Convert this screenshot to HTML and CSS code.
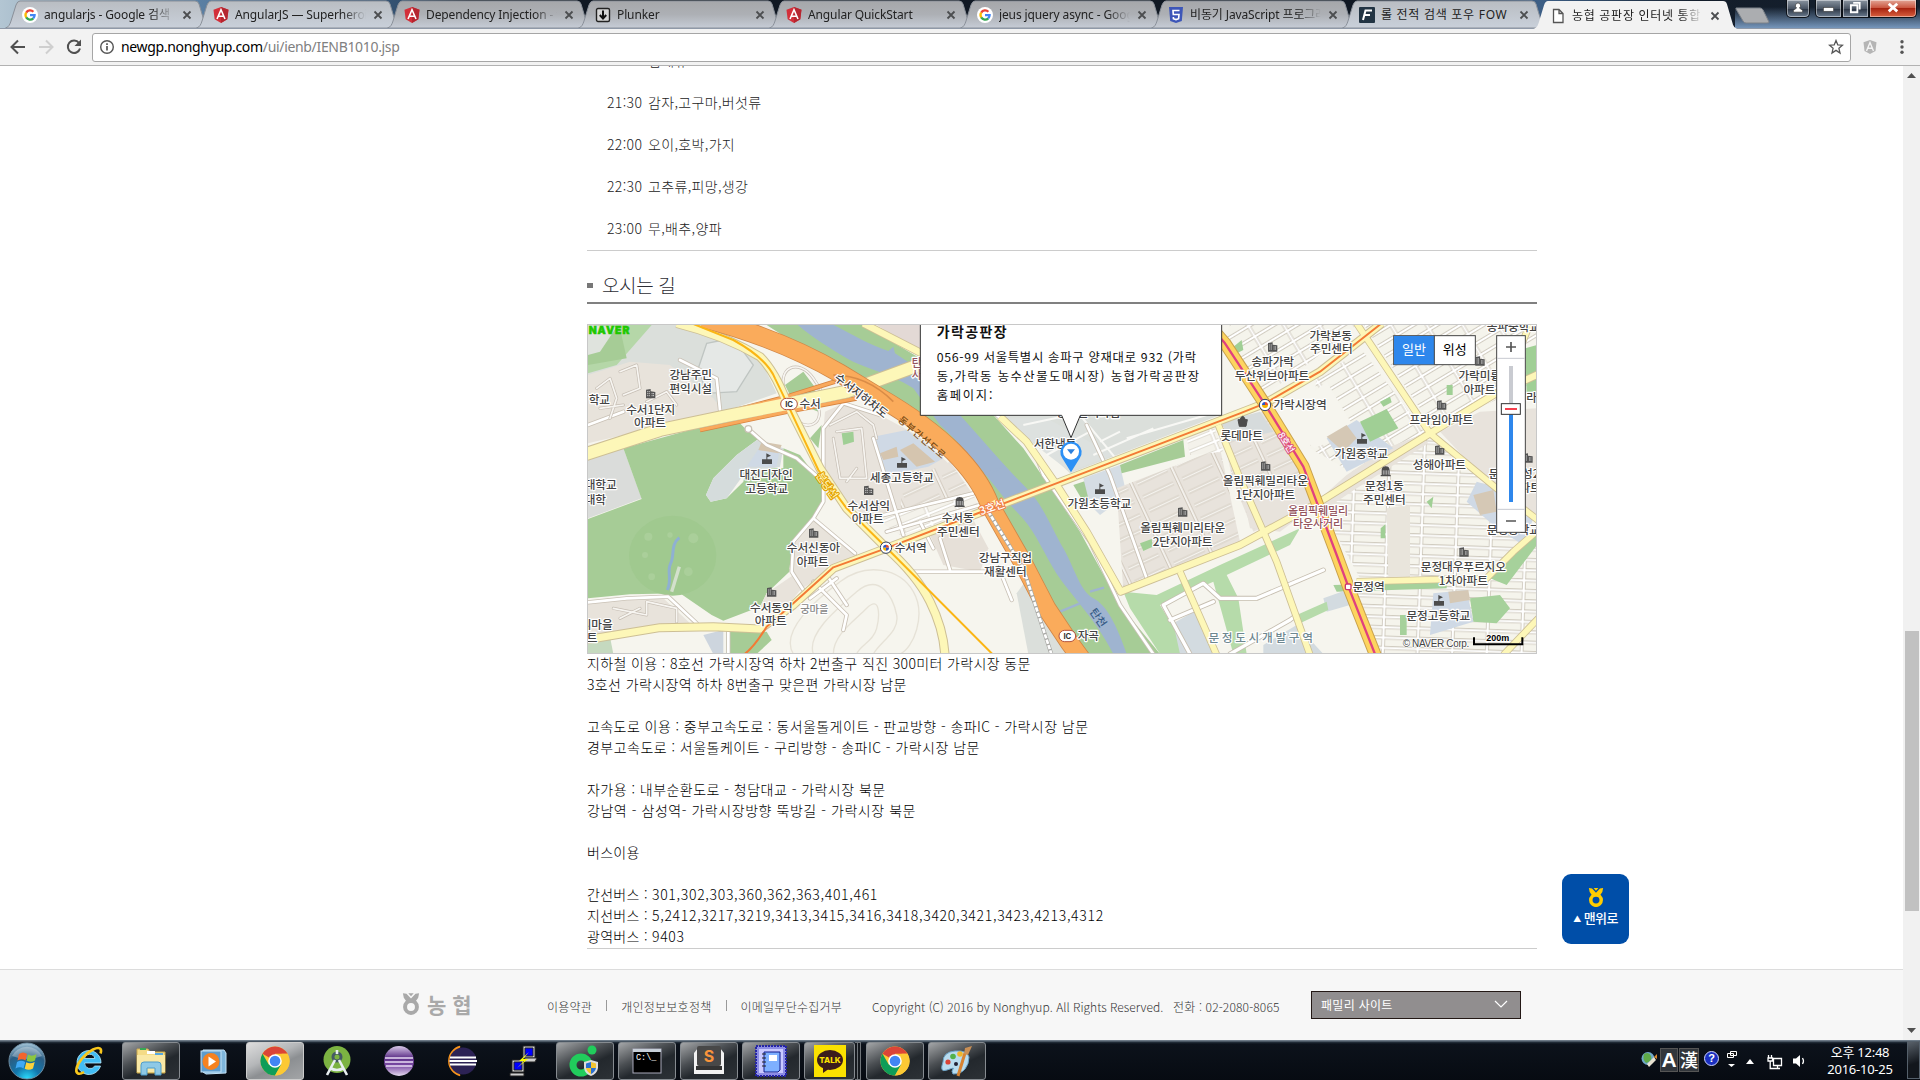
FILE: index.html
```html
<!DOCTYPE html>
<html lang="ko">
<head>
<meta charset="utf-8">
<title>농협 공판장 인터넷 통합</title>
<link rel="stylesheet" href="styles.css">
</head>
<body>
<svg class="defs" width="0" height="0">
  <defs>
    <linearGradient id="tabfill" x1="0" y1="0" x2="0" y2="1"><stop offset="0" stop-color="#a6a7aa"/><stop offset=".5" stop-color="#adb0b5"/><stop offset="1" stop-color="#c6ccd6"/></linearGradient>
    <linearGradient id="tabfill2" x1="0" y1="0" x2="0" y2="1"><stop offset="0" stop-color="#b9bdc2"/><stop offset="1" stop-color="#c9d0da"/></linearGradient>
    <radialGradient id="orb" cx=".5" cy="1" r="1"><stop offset="0" stop-color="#2ce0ff"/><stop offset=".35" stop-color="#1277ad"/><stop offset=".7" stop-color="#2b5d83"/><stop offset="1" stop-color="#a9c9dc"/></radialGradient>
    <linearGradient id="purple" x1="0" y1="0" x2="0" y2="1"><stop offset="0" stop-color="#d8c8e8"/><stop offset=".4" stop-color="#5b2e86"/><stop offset=".65" stop-color="#7b4ba5"/><stop offset="1" stop-color="#e6dcf0"/></linearGradient>
    <symbol id="tabshape" viewBox="0 0 204 28" preserveAspectRatio="none"><path d="M.5 28C4 27 5 24 6 21L11 5Q12.500 1 15 1H190Q193 1 194 4L200 24Q201 27 204 28Z"/></symbol>
    <symbol id="g" viewBox="0 0 16 16"><circle cx="8" cy="8" r="8" fill="#fff"/><g fill="none" stroke-width="2.300"><path d="M4.200 5.600A4.600 4.600 0 0 1 11.400 4.700" stroke="#ea4335"/><path d="M4.300 10.500A4.600 4.600 0 0 1 4.200 5.600" stroke="#fbbc05"/><path d="M11.300 11.400A4.600 4.600 0 0 1 4.200 10.400" stroke="#34a853"/><path d="M8 8.200H12.600A4.600 4.600 0 0 1 11.200 11.400" stroke="#4285f4"/></g></symbol>
    <symbol id="ng" viewBox="0 0 16 16"><path d="M8 0L15.500 2.700L14.300 12.300L8 16L1.700 12.300L.5 2.700Z" fill="#d32f3a"/><path d="M8 0L15.500 2.700L14.300 12.300L8 16Z" fill="#b52630"/><path d="M4 12L8 2.800L12 12M5.600 9.200H10.400" fill="none" stroke="#fff" stroke-width="1.600"/></symbol>
    <symbol id="x" viewBox="0 0 10 10"><path d="M1.500 1.500L8.500 8.500M8.500 1.500L1.500 8.500" stroke="#4c4e50" stroke-width="1.800"/></symbol>
    <symbol id="chrome" viewBox="0 0 32 32"><circle cx="16" cy="16" r="14.500" fill="#fcc934"/><path d="M16 16L3.500 8.700A14.500 14.500 0 0 1 28.600 8.700H16Z" fill="#db4437"/><path d="M16 16L16 30.500A14.500 14.500 0 0 1 3.500 8.700L9.700 19.600Z" fill="#0f9d58"/><path d="M16 30.500L22.300 19.600L16 16Z" fill="#0f9d58"/><path d="M16 30.500L22.700 18.500V8.700H28.600A14.500 14.500 0 0 1 16 30.500Z" fill="#fcc934"/><circle cx="16" cy="16" r="6.800" fill="#fff"/><circle cx="16" cy="16" r="5.300" fill="#4285f4"/></symbol>
    <symbol id="nh" viewBox="0 0 20 24"><ellipse cx="10" cy="15.300" rx="6.600" ry="6.600" fill="none" stroke="currentColor" stroke-width="4.400"/><path d="M1 0L5 .5L10 6L15 .5L19 0L18 5L14.500 10L10 9.500L5.500 10L2 5ZM7 0L10 3.500L13 0Z" fill="currentColor"/></symbol>
  </defs>
</svg>

<header class="browser">
  <div class="tabstrip">
    <div class="tabs">
      <div class="tab lite"><svg class="shape"><use href="#tabshape"/></svg><div class="in"><svg class="fav"><use href="#g"/></svg><span class="t">angularjs - Google 검색</span><svg class="x"><use href="#x"/></svg></div></div>
      <div class="tab lite"><svg class="shape"><use href="#tabshape"/></svg><div class="in"><svg class="fav"><use href="#ng"/></svg><span class="t">AngularJS — Superheroic</span><svg class="x"><use href="#x"/></svg></div></div>
      <div class="tab"><svg class="shape"><use href="#tabshape"/></svg><div class="in"><svg class="fav"><use href="#ng"/></svg><span class="t">Dependency Injection - ts</span><svg class="x"><use href="#x"/></svg></div></div>
      <div class="tab"><svg class="shape"><use href="#tabshape"/></svg><div class="in"><svg class="fav" viewBox="0 0 16 16"><rect x="1.500" y="1.500" width="13" height="13" rx="1.500" fill="#d6d6d6" stroke="#222" stroke-width="1.400"/><path d="M8 3.500V11M4.800 8L8 11.500L11.200 8" fill="none" stroke="#111" stroke-width="2"/></svg><span class="t">Plunker</span><svg class="x"><use href="#x"/></svg></div></div>
      <div class="tab"><svg class="shape"><use href="#tabshape"/></svg><div class="in"><svg class="fav"><use href="#ng"/></svg><span class="t">Angular QuickStart</span><svg class="x"><use href="#x"/></svg></div></div>
      <div class="tab"><svg class="shape"><use href="#tabshape"/></svg><div class="in"><svg class="fav"><use href="#g"/></svg><span class="t">jeus jquery async - Google</span><svg class="x"><use href="#x"/></svg></div></div>
      <div class="tab"><svg class="shape"><use href="#tabshape"/></svg><div class="in"><svg class="fav" viewBox="0 0 16 16"><path d="M1 0H15L13.800 14L8 16L2.200 14Z" fill="#3d56b8"/><path d="M11.500 3.500H5L5.300 7.500H11L10.600 11.700L8 12.600L5.400 11.700V10" fill="none" stroke="#fff" stroke-width="1.600"/></svg><span class="t">비동기 JavaScript 프로그래밍</span><svg class="x"><use href="#x"/></svg></div></div>
      <div class="tab lite"><svg class="shape"><use href="#tabshape"/></svg><div class="in"><svg class="fav" viewBox="0 0 16 16"><rect width="16" height="16" rx="1" fill="#223443"/><path d="M4 13L6.500 3.500H13M5.500 8H11" fill="none" stroke="#fff" stroke-width="2"/></svg><span class="t ko full">롤 전적 검색 포우 FOW</span><svg class="x"><use href="#x"/></svg></div></div>
      <div class="tab active"><svg class="shape"><use href="#tabshape"/></svg><div class="in"><svg class="fav" viewBox="0 0 16 16"><path d="M3.500 1.500H9L13 5.500V14.500H3.500ZM9 1.500V5.500H13" fill="#fff" stroke="#555" stroke-width="1.300"/></svg><span class="t ko">농협 공판장 인터넷 통합</span><svg class="x"><use href="#x"/></svg></div></div>
    </div>
    <svg class="newtab" viewBox="0 0 36 17"><path d="M1 1H25Q27 1 28 3L34 15Q34 16 32 16H11Q9 16 8 14L1 2Z" fill="#abadb0" stroke="#7d8289"/></svg>
    <div class="winbtns">
      <span class="wb user"><svg viewBox="0 0 24 18"><path d="M12 3a3 3 0 0 1 1.500 5.500L17 11V13H7V11L10.500 8.500A3 3 0 0 1 12 3Z" fill="#fff" stroke="#333" stroke-width=".7"/></svg></span>
      <span class="wb min"><svg viewBox="0 0 27 18"><rect x="8" y="8" width="11" height="4" fill="#fff" stroke="#444" stroke-width=".7"/></svg></span><span class="wb res"><svg viewBox="0 0 27 18"><path d="M11 3H18V10M8.500 5.500H15.500V13H8.500Z" fill="none" stroke="#fff" stroke-width="2"/></svg></span><span class="wb close"><svg viewBox="0 0 48 18"><path d="M19.500 4L28.500 12M28.500 4L19.500 12" stroke="#fff" stroke-width="3"/></svg></span>
    </div>
  </div>
  <div class="toolbar">
    <svg class="nav" viewBox="0 0 86 36" width="86" height="36"><g fill="none" stroke="#505050" stroke-width="2"><path d="M25 18H12M18 11.500L11.500 18L18 24.500"/><path d="M39 18H52M46 11.500L52.500 18L46 24.500" stroke="#cfcfcf"/><path d="M79 14A6.200 6.200 0 1 0 80 19.500"/></g><path d="M81 10.500V17H74.500Z" fill="#505050"/></svg>
    <div class="url">
      <svg width="16" height="16" viewBox="0 0 16 16"><circle cx="8" cy="8" r="6.300" fill="none" stroke="#555" stroke-width="1.400"/><path d="M8 7V11.500M8 4.300V5.900" stroke="#555" stroke-width="1.700"/></svg>
      <span class="addr">newgp.nonghyup.com<i>/ui/ienb/IENB1010.jsp</i></span>
      <svg width="16" height="16" viewBox="0 0 16 16"><path d="M8 1.500L9.800 5.900L14.500 6.200L10.900 9.300L12 14L8 11.400L4 14L5.100 9.300L1.500 6.200L6.200 5.900Z" fill="none" stroke="#555" stroke-width="1.300"/></svg>
    </div>
    <svg width="16" height="16" viewBox="0 0 16 16"><path d="M8 1L14.500 3.300L13.500 12L8 15L2.500 12L1.500 3.300Z" fill="#b5b5b5"/><path d="M4.500 12L8 3.500L11.500 12M6 9.300H10" fill="none" stroke="#f4f4f4" stroke-width="1.400"/></svg>
    <svg width="6" height="16" viewBox="0 0 6 16"><g fill="#555"><circle cx="3" cy="2.800" r="1.700"/><circle cx="3" cy="8" r="1.700"/><circle cx="3" cy="13.200" r="1.700"/></g></svg>
  </div>
</header>

<div class="viewport">
<main class="page">
  <div class="col">
    <ul class="sched">
      <li>21:00 엽채류</li><li>21:30 감자,고구마,버섯류</li><li>22:00 오이,호박,가지</li><li>22:30 고추류,피망,생강</li><li>23:00 무,배추,양파</li>
    </ul>
    <h2>오시는 길</h2>
    <svg class="map" viewBox="21 27 2850 990" width="950" height="330">
      <defs>
        <pattern id="blkA" width="88" height="30" patternUnits="userSpaceOnUse" patternTransform="rotate(-22)"><rect width="88" height="30" fill="#f4f2eb"/><path d="M0 15H88M40 0V30" stroke="#cfc9bd" stroke-width="11"/><path d="M0 15H88M40 0V30" stroke="#fff" stroke-width="7"/></pattern>
        <pattern id="blkB" width="92" height="36" patternUnits="userSpaceOnUse" patternTransform="rotate(-31)"><rect width="92" height="36" fill="#f5f4ec"/><path d="M0 18H92M46 0V36" stroke="#c6bfb2" stroke-width="11"/><path d="M0 18H92M46 0V36" stroke="#fff" stroke-width="6.500"/></pattern>
        <pattern id="blkC" width="104" height="31" patternUnits="userSpaceOnUse" patternTransform="rotate(2)"><rect width="104" height="31" fill="#f5f4ec"/><path d="M0 15H104M50 0V31" stroke="#c6bfb2" stroke-width="11"/><path d="M0 15H104M50 0V31" stroke="#fff" stroke-width="6.500"/></pattern>
        <pattern id="apt" width="130" height="44" patternUnits="userSpaceOnUse" patternTransform="rotate(-25)"><rect width="130" height="44" fill="#e8e3dc"/><path d="M0 22H100M115 0V44" stroke="#c9c0b3" stroke-width="10" fill="none"/><path d="M0 22H100M115 0V44" stroke="#f6f4f0" stroke-width="5.500" fill="none"/></pattern>
        <symbol id="bd" viewBox="0 0 30 30" overflow="visible"><path d="M0 2L14 0V7L28 9V28H0Z" fill="#555"/><path d="M4 8H11M4 14H11M4 20H11M17 14H25M17 20H25" stroke="#eee" stroke-width="3" stroke-dasharray="2.500 2"/></symbol>
        <symbol id="sc" viewBox="0 0 30 32" overflow="visible"><path d="M0 18H30V32H0ZM13 0V18H16V12L27 7L13 0Z" fill="#4c4c4c"/></symbol>
        <symbol id="ct" viewBox="0 0 30 30" overflow="visible"><path d="M3 12A12 12 0 0 1 27 12V26H30V30H0V26H3ZM13 0H17V4H13Z" fill="#4c4c4c"/><path d="M8 12V25M13 12V25M18 12V25M23 12V25" stroke="#ddd" stroke-width="2"/></symbol>
      </defs>
      <rect x="0" y="0" width="2900" height="1040" fill="#f6f5ee"/>
      <!-- neighbourhood fills -->
      <path d="M90 30H330L540 130L590 235L430 290L24 380V30Z" fill="#dbdfdb"/>
      <path d="M24 180L150 140L270 150L400 250L430 290L24 385Z" fill="#e8e3db"/>
      <path d="M24 30H215L110 150L24 175Z" fill="#b5d7a8"/><path d="M24 40H120L140 130L24 150Z" fill="#a6cc96"/>
      <path d="M24 30L110 35L60 110L24 120Z" fill="#dfe3dd"/>
      <path d="M380 85L430 75L490 110L520 150L470 230L380 235L355 160Z" fill="#e5e8e6" stroke="#bfc5c2" stroke-width="4"/>
      <path d="M24 415L130 400L185 550L24 610Z" fill="#dadcda"/>
      <path d="M130 400L330 345L470 315L500 345L535 372L470 420L400 490L378 540L392 560L440 550L490 500L500 455L610 460L610 400L660 420L705 480L735 500L730 560L700 612L665 650L640 690L628 770L560 835L540 875L430 917L395 900L300 835L150 838L24 850V612L185 552Z" fill="#a6cc96"/>
      <path d="M535 372L470 420L400 490L378 540L392 560L440 550L490 480L600 455L610 400Z" fill="#d5dcdc"/>
      <path d="M540 395L600 400L590 455L500 455Z" fill="#cfd9e5"/><path d="M545 380L605 390L595 415L535 405Z" fill="#d5c5af"/>
      <ellipse cx="278" cy="722" rx="131" ry="120" fill="#a0c98f"/><g fill="#aacf9a"><circle cx="205" cy="665" r="12"/><circle cx="270" cy="660" r="8"/><circle cx="340" cy="670" r="15"/><circle cx="195" cy="720" r="9"/><circle cx="325" cy="770" r="13"/><circle cx="215" cy="785" r="10"/></g>
      <path d="M298 668C270 690 285 720 272 745S278 790 262 825" fill="none" stroke="#8fb0d2" stroke-width="9"/><path d="M298 755L275 830" stroke="#d3e0cc" stroke-width="10"/>
      <path d="M24 862L250 850L330 925L24 960Z" fill="#e8e3db"/><path d="M24 985L90 965L100 1017H24Z" fill="#c5d9bf"/>
      <path d="M370 960L430 945V1017H400Z" fill="#cdd5de"/><path d="M440 950H560L575 975L530 1017H440Z" fill="#a6cc96"/>
      <path d="M735 290L790 265L900 300L1010 360L1100 440L1180 540L960 600L870 610L790 560L740 480L725 400Z" fill="#e8e3dc"/>
      <path d="M970 500L1110 440L1180 540L960 590Z" fill="url(#apt)"/>
      <path d="M880 365L980 345L1090 430L1045 455L920 480Z" fill="#cfd9e5"/><path d="M900 415L950 395L955 425L910 435ZM960 405L1000 385L1065 440L1010 455Z" fill="#d5c5af"/>
      <path d="M870 600L1180 535L1200 590L960 660Z" fill="url(#blkA)"/>
      <path d="M1050 660L1180 615L1225 700L1200 770L1090 750Z" fill="#e6e0d8"/>
      <path d="M705 615L830 720L650 830L628 760L640 690Z" fill="#e8e3db"/><path d="M560 835L640 780L665 820L600 900L540 875Z" fill="#e8e3db"/>
      <path d="M690 370L725 330L715 400ZM615 210L670 170L715 230V290L640 260Z" fill="#a6cc96"/>
      <path d="M1310 835L1350 780L1470 1017H1345Z" fill="#dbdfdb"/>
      <g fill="none" stroke="#e6e2d7" stroke-width="4"><path d="M640 1017C600 950 700 860 780 800S960 760 1000 830S1000 1000 960 1017"/><path d="M700 1017C680 960 760 890 830 830S940 850 950 900S900 980 880 1017"/><path d="M760 1017C760 960 820 920 860 880S900 900 890 940S840 990 830 1017"/></g>
      <!-- river corridor -->
      <path d="M560 30H850L1020 130L1240 300L1330 400L1440 560L1500 650L1620 870L1740 1017H1500L1330 740L1210 560L1100 400L900 250Z" fill="#a6cc96"/>
      <path d="M650 27H755C820 60 870 90 925 108L940 95L945 115L1020 165L1140 300C1220 390 1290 470 1340 520C1390 570 1420 650 1450 700S1500 830 1540 850S1610 930 1640 1017H1600C1540 900 1460 830 1420 760S1360 640 1310 590S1180 420 1080 330L1000 220C920 170 850 160 800 130S700 70 650 27Z" fill="#9fb4d0"/>
      <path d="M1180 490L1260 460M1440 890L1500 865M1530 830L1572 818" stroke="#9fb4d0" stroke-width="7"/>
      <path d="M1020 30H1920V300L1470 475L1380 390L1240 300L1020 130Z" fill="#dbdfdb"/><path d="M890 30H1020V110Z" fill="#e3d9d5"/>
      <path d="M1260 310H1400L1600 420L1470 470Z" fill="#dde1df"/>
      <g stroke="#f8f8f5" stroke-width="6" fill="none"><path d="M1330 330L1470 300M1400 420L1530 350M1500 300L1640 470M1540 420L1720 340M1640 370L1880 300M1560 380L1620 350"/></g>
      <!-- east apartments and blocks -->
      <path d="M1480 510L1570 480L1580 530L1510 560Z" fill="#a6cc96"/><path d="M1510 490L1620 450L1640 540L1560 600L1530 570Z" fill="#d5dde4"/>
      <path d="M1610 520L1920 400L1980 680L1700 790L1630 830Z" fill="url(#apt)"/><path d="M1680 685L1715 672L1718 695L1690 708Z" fill="#a0cf95"/>
      <path d="M1620 450L1810 375L1815 425L1625 475Z" fill="#a6cc96"/><path d="M1820 370L1900 330L1930 410L1830 420Z" fill="url(#blkA)"/>
      <path d="M1920 330L2050 290L2110 380L2220 560L2020 650L1960 500Z" fill="url(#apt)"/>
      <path d="M1925 320L2040 290L2080 350L1950 380Z" fill="#d6dbdc"/>
      <path d="M1980 500L2180 480L2220 560L2100 650L2010 640Z" fill="#e8e3dc"/>
      <path d="M1950 30H2330L2180 150L2040 250L1930 80Z" fill="url(#blkB)"/>
      <path d="M2210 180L2350 110L2540 360L2330 480L2190 400Z" fill="url(#blkB)"/><path d="M2110 300L2240 200L2330 350L2200 400Z" fill="#f6f5ee"/>
      <path d="M2350 27H2871V200L2560 340Z" fill="url(#blkB)"/>
      <path d="M2580 350L2700 290L2871 280V600L2740 520Z" fill="#e8e3dc"/>
      <path d="M2300 490L2550 365L2640 430L2860 620L2780 780L2340 790L2220 570Z" fill="url(#blkC)"/>
      <path d="M2310 800H2700L2840 690L2871 650V1017H2400Z" fill="url(#blkC)"/>
      <path d="M2210 560L2300 480L2420 400L2520 360L2545 385L2330 520L2240 580Z" fill="#e8e3db"/><path d="M2420 580L2490 570V790H2425Z" fill="#e9e5dc"/>
      <path d="M2240 370L2330 315L2440 400L2300 470Z" fill="#cfd9e5"/><path d="M2240 365L2300 330L2330 370L2290 410Z" fill="#d5c8b5"/>
      <path d="M2340 320L2420 282L2455 340L2370 380Z" fill="#a0cf95"/><path d="M2400 260L2430 245L2435 262L2410 275ZM1955 100L1985 75L1990 105L1965 118ZM2600 210H2618V240H2600ZM2402 640L2416 628V670H2402ZM2540 560L2560 545L2555 580Z" fill="#a0cf95"/>
      <path d="M2690 500L2760 520L2860 610L2830 690L2750 640L2660 560Z" fill="#cfd9e5"/><path d="M2680 540L2740 525L2750 590L2700 600Z" fill="#d5c8b5"/>
      <path d="M2836 100L2871 90V250L2840 240Z" fill="#a0cf95"/><path d="M2260 810L2600 800V820L2270 830ZM2730 790L2840 680L2871 640V690L2780 810ZM2670 850L2760 840L2790 880L2750 925L2680 920ZM2460 900H2480V960H2460Z" fill="#a6d19b"/>
      <path d="M2560 835L2660 825L2680 920L2550 960Z" fill="#cfd9e5"/><path d="M2605 830L2665 825L2670 855L2610 865Z" fill="#d5c8b5"/>
      <!-- southern development district -->
      <path d="M1630 830L1730 840L1920 750L2160 640L2130 690L1940 780L1975 850L2000 1017H1960L1900 800L1740 870L1830 1017H1740L1650 880Z" fill="#b6dbaa"/>
      <path d="M1780 925L1860 880L1900 1017H1800ZM2230 850L2300 825L2310 870L2240 890ZM2050 990L2150 930L2230 1017H2050Z" fill="#d3dbe0"/>
      <path d="M2150 900L2240 860L2245 885L2160 925Z" fill="#b6dbaa"/>
      <g fill="none" stroke-linecap="round" stroke-linejoin="round">
        <path d="M1830 1017L1750 870L1870 805L1920 850H2030L2230 765M1770 915L1900 860M1950 1017L2130 915L2150 900" stroke="#c6beb0" stroke-width="15"/><path d="M1830 1017L1750 870L1870 805L1920 850H2030L2230 765M1770 915L1900 860M1950 1017L2130 915L2150 900" stroke="#fff" stroke-width="10"/>
        <g stroke="#c9c1b5" stroke-width="13"><path d="M24 862L140 850L265 845L350 925M505 342L560 390L650 430L730 500V560L700 610L640 680L635 770L670 825M700 610L825 715M445 950V1017M730 480V340L790 265L900 300M880 370L970 660M870 610L1180 535M920 650L1200 570M1000 770H1230M1020 620L1060 700M1080 670L1110 765M1265 780L1295 855M700 800L800 900L790 945M740 780L800 870M690 850L770 790M300 135L410 190L420 285M24 330L130 290"/><path d="M1250 300L1360 400L1390 480L1530 680L1620 870L1720 1017M1520 330L1590 480L1700 790"/></g>
        <g stroke="#fff" stroke-width="8"><path d="M24 862L140 850L265 845L350 925M505 342L560 390L650 430L730 500V560L700 610L640 680L635 770L670 825M700 610L825 715M445 950V1017M730 480V340L790 265L900 300M880 370L970 660M870 610L1180 535M920 650L1200 570M1000 770H1230M1020 620L1060 700M1080 670L1110 765M1265 780L1295 855M700 800L800 900L790 945M740 780L800 870M690 850L770 790M300 135L410 190L420 285M24 330L130 290"/><path d="M1250 300L1360 400L1390 480L1530 680L1620 870L1720 1017M1520 330L1590 480L1700 790"/></g>
        <g stroke="#c6beb4" stroke-width="9"><path d="M50 220L90 190L110 250L90 310M60 280L130 270M120 170L170 150L180 220L130 240M200 260L260 230L290 270M620 250C580 150 660 130 700 190S730 240 700 220M640 310C680 350 740 330 710 260"/><path d="M750 330L830 290L880 330L890 370M760 370L780 490L860 490L845 340L770 350M800 500L830 460M100 880L200 900V860L290 880V920M120 910L180 880"/></g>
        <g stroke="#f7f5f1" stroke-width="5"><path d="M50 220L90 190L110 250L90 310M60 280L130 270M120 170L170 150L180 220L130 240M200 260L260 230L290 270M620 250C580 150 660 130 700 190S730 240 700 220M640 310C680 350 740 330 710 260"/><path d="M750 330L830 290L880 330L890 370M760 370L780 490L860 490L845 340L770 350M800 500L830 460M100 880L200 900V860L290 880V920M120 910L180 880"/></g>
        <circle cx="505" cy="342" r="10" fill="#fff" stroke="#c9c1b5" stroke-width="4"/>
      </g>
      <path d="M785 355L820 350L822 380L790 390Z" fill="#a0cf95"/>
      <!-- main roads -->
      <g fill="none" stroke-linejoin="round">
        <g stroke="#cdbf95">
          <path d="M450 290L620 245L780 195M360 345L620 290L830 250" stroke="#d68440" stroke-width="14"/>
          <path d="M15 418L240 345L440 303L620 267L800 230L1030 145" stroke-width="42"/><path d="M850 25L1025 115" stroke-width="24"/>
          <path d="M290 25Q430 60 540 125Q585 170 620 262L720 460L800 580L920 700Q1010 780 1050 860T1095 1020" stroke-width="28"/>
          <path d="M15 975L240 938L400 935L540 942L640 870L760 760L918 700L1470 490L2055 265L2220 170L2405 25" stroke-width="27"/>
          <path d="M1260 305L1340 380L1430 510L1520 650L1622 830L1980 690L2220 560L2550 355L2740 240L2880 175" stroke-width="24"/>
          <path d="M2330 25L2550 355L2750 520L2880 620M2330 800L2720 790L2800 710L2880 640M1915 330L1980 490L2090 740L2190 1020M1800 770L1910 1020M2770 1020L2880 905M2820 100L2850 27" stroke-width="22"/>
        </g>
        <g stroke="#fdf7b8">
          <path d="M450 290L620 245L780 195M360 345L620 290L830 250" stroke="#f9a95c" stroke-width="9"/>
          <path d="M15 418L240 345L440 303L620 267L800 230L1030 145" stroke-width="36"/><path d="M850 25L1025 115" stroke-width="19"/>
          <path d="M290 25Q430 60 540 125Q585 170 620 262L720 460L800 580L920 700Q1010 780 1050 860T1095 1020" stroke-width="22"/>
          <path d="M15 975L240 938L400 935L540 942L640 870L760 760L918 700L1470 490L2055 265L2220 170L2405 25" stroke-width="21"/>
          <path d="M1260 305L1340 380L1430 510L1520 650L1622 830L1980 690L2220 560L2550 355L2740 240L2880 175" stroke-width="19"/>
          <path d="M2330 25L2550 355L2750 520L2880 620M2330 800L2720 790L2800 710L2880 640M1915 330L1980 490L2090 740L2190 1020M1800 770L1910 1020M2770 1020L2880 905M2820 100L2850 27" stroke-width="17"/>
        </g>
        <path d="M370 10Q600 70 780 175L900 248Q1040 330 1120 410T1230 570L1330 745L1400 880L1470 985L1510 1040" stroke="#cf8748" stroke-width="58"/>
        <path d="M370 10Q600 70 780 175L900 248Q1040 330 1120 410T1230 570L1330 745L1400 880L1470 985L1510 1040" stroke="#faab5b" stroke-width="53"/>
        <path d="M760 180Q860 180 940 260" stroke="#d98c47" stroke-width="5"/>
        <path d="M1200 590L1250 560" stroke="#fdf4b3" stroke-width="16"/>
        <path d="M1225 590L1330 760L1415 1020" stroke="#a9a9a5" stroke-width="12"/><path d="M1225 590L1330 760L1415 1020" stroke="#fff" stroke-width="8" stroke-dasharray="13 4"/>
        <path d="M1870 10L1935 85L2055 268L2170 455L2270 720L2305 815L2390 1030" stroke="#c9a24d" stroke-width="38"/><path d="M1870 10L1935 85L2055 268L2170 455L2270 720L2305 815L2390 1030" stroke="#fdd45f" stroke-width="32"/>
        <path d="M1870 10L1935 85L2055 268L2170 455L2270 720L2305 815L2390 1030" stroke="#e0417f" stroke-width="7"/>
        <path d="M335 25L460 75Q560 130 585 190L620 262L715 465L800 580L918 697L1240 1020" stroke="#fbb514" stroke-width="6"/>
        <path d="M490 1020Q520 1000 560 935L640 865L760 757L918 700L1180 600L1980 295L2055 265L2220 170L2405 25" stroke="#f37a35" stroke-width="6"/>
      </g>
      <!-- symbols -->
      <g>
        <use href="#bd" x="198" y="222" width="30" height="30"/><use href="#bd" x="852" y="512" width="30" height="30"/><use href="#bd" x="687" y="640" width="30" height="30"/><use href="#bd" x="561" y="817" width="30" height="30"/><use href="#bd" x="1794" y="577" width="30" height="30"/><use href="#bd" x="2064" y="82" width="30" height="30"/><use href="#bd" x="2043" y="439" width="30" height="30"/><use href="#bd" x="2686" y="124" width="30" height="30"/><use href="#bd" x="2571" y="256" width="30" height="30"/><use href="#bd" x="2565" y="391" width="30" height="30"/><use href="#bd" x="2638" y="697" width="30" height="30"/><use href="#bd" x="2830" y="415" width="30" height="30"/>
        <use href="#sc" x="546" y="415" width="30" height="32"/><use href="#sc" x="951" y="426" width="30" height="32"/><use href="#sc" x="1545" y="505" width="30" height="32"/><use href="#sc" x="2331" y="354" width="30" height="32"/><use href="#sc" x="2562" y="840" width="30" height="32"/>
        <use href="#ct" x="1124" y="546" width="30" height="30"/><use href="#ct" x="2402" y="454" width="30" height="30"/>
        <path d="M1974 314H2002L1998 334H1978ZM1980 314Q1988 294 1996 314" fill="#4c4c4c" stroke="#4c4c4c" stroke-width="3"/>
        <g fill="#fff"><circle cx="918" cy="698" r="17" stroke="#35415f" stroke-width="3"/><circle cx="2055" cy="270" r="17" stroke="#35415f" stroke-width="3"/><rect x="2296" y="807" width="17" height="17" rx="4" stroke="#c9396d" stroke-width="4"/></g>
        <path d="M918 689A9 9 0 0 1 927 698H918ZM2055 261A9 9 0 0 1 2064 270H2055Z" fill="#e74a2b"/><path d="M909 698A9 9 0 0 1 918 689V698ZM918 698H927A9 9 0 0 1 918 707ZM2046 270A9 9 0 0 1 2055 261V270Z" fill="#2a56c6"/><path d="M909 698H918V707A9 9 0 0 1 909 698ZM2046 270H2064A9 9 0 0 1 2046 270Z" fill="#f5b400"/>
        <g fill="#fff" stroke="#b5533c" stroke-width="3"><rect x="602" y="250" width="50" height="34" rx="17"/><rect x="1437" y="946" width="50" height="34" rx="17"/></g>
      </g>
      <g class="lb">
        <text x="627" y="276" class="ic">IC</text><text x="1462" y="972" class="ic">IC</text>
        <text x="332" y="191">강남주민</text><text x="332" y="233">편익시설</text><text x="58" y="268">학교</text><text x="212" y="296">수서1단지</text><text x="210" y="337">아파트</text><text x="690" y="279">수서</text>
        <text x="558" y="491">대진디자인</text><text x="560" y="533">고등학교</text><text x="62" y="523">대학교</text><text x="46" y="566">대학</text><text x="965" y="502">세종고등학교</text><text x="866" y="584">수서삼익</text><text x="863" y="625">아파트</text>
        <text x="1133" y="620">수서동</text><text x="1135" y="662">주민센터</text><text x="992" y="710">수서역</text><text x="700" y="712">수서신동아</text><text x="698" y="753">아파트</text><text x="1276" y="740">강남구직업</text><text x="1276" y="782">재활센터</text><text x="574" y="890">수서동익</text><text x="572" y="931">아파트</text><text x="703" y="895" class="dim">궁마을</text><text x="50" y="941">리마을</text><text x="36" y="981">트</text>
        <text x="1010" y="155" class="br">탄</text><text x="1010" y="191" class="br">사</text><text x="1425" y="398">서한냉동</text><text x="1525" y="305">농산물백화점</text><text x="1558" y="580">가원초등학교</text><text x="1808" y="650">올림픽훼미리타운</text><text x="1808" y="692">2단지아파트</text><text x="1525" y="974">자곡</text>
        <text x="2252" y="74">가락본동</text><text x="2254" y="115">주민센터</text><text x="2078" y="154">송파가락</text><text x="2076" y="195">두산위브아파트</text><text x="2160" y="281">가락시장역</text><text x="1985" y="375">롯데마트</text><text x="2344" y="429">가원중학교</text><text x="2056" y="511">올림픽훼밀리타운</text><text x="2056" y="553">1단지아파트</text><text x="2214" y="601" class="br">올림픽훼밀리</text><text x="2214" y="639" class="br">타운사거리</text><text x="2413" y="526">문정1동</text><text x="2413" y="568">주민센터</text>
        <text x="2584" y="328">프라임아파트</text><text x="2578" y="463">성해아파트</text><text x="2699" y="195">가락미륭</text><text x="2698" y="236">아파트</text><text x="2800" y="47">송파중학교</text><text x="2855" y="260">라</text><text x="2742" y="488">문</text><text x="2852" y="488">성2</text><text x="2850" y="531">파트</text><text x="2800" y="658">문정중학교</text><text x="2650" y="769">문정대우푸르지오</text><text x="2650" y="811">1차아파트</text><text x="2366" y="827">문정역</text><text x="2575" y="916">문정고등학교</text>
        <text x="2046" y="980" class="dist">문정도시개발구역</text>
        <text x="836" y="252" transform="rotate(38 836 252)">수서지하차도</text><text x="1020" y="376" class="hw" transform="rotate(41 1020 376)">동부간선도로</text><text x="732" y="518" class="bd" transform="rotate(55 732 518)">분당선</text><text x="1240" y="588" class="l3" transform="rotate(-19 1240 588)">3호선</text><text x="2110" y="388" class="l8" transform="rotate(58 2110 388)">8호선</text><text x="1545" y="915" class="wt" transform="rotate(55 1545 915)">탄천</text>
      </g>
      <text x="26" y="57" class="naver" textLength="122">NAVER</text>
      <text x="2468" y="995" class="corp" textLength="200">© NAVER Corp.</text><path d="M2682 967V988H2827V967" fill="none" stroke="#000" stroke-width="6"/><text x="2753" y="977" class="scale">200m</text>
      <!-- info window -->
      <path d="M1021 20V301H1445L1473 368L1501 301H1925V20Z" fill="#fff" stroke="#333" stroke-width="3"/>
      <g class="info"><text x="1070" y="65" class="b" textLength="210">가락공판장</text><text x="1070" y="142" textLength="778">056-99 서울특별시 송파구 양재대로 932 (가락</text><text x="1070" y="199" textLength="787">동,가락동 농수산물도매시장) 농협가락공판장</text><text x="1070" y="255" textLength="167">홈페이지:</text></g>
      <path d="M1473 472L1447 430A32 32 0 1 1 1499 430Z" fill="#2c90f5"/><circle cx="1473" cy="410" r="24" fill="#fff"/><path d="M1461 403H1485L1473 418Z" fill="#2c80dd"/>
      <!-- controls -->
      <rect x="2441" y="62" width="245" height="87" fill="#fff" stroke="#444" stroke-width="3"/><rect x="2442" y="63" width="121" height="85" fill="#2e87ec"/><path d="M2563 62V149" stroke="#444" stroke-width="3"/>
      <g class="ctl"><text x="2502" y="118" fill="#fff">일반</text><text x="2624" y="118" fill="#000">위성</text></g>
      <rect x="2750" y="62" width="86" height="590" fill="#fff" stroke="#444" stroke-width="3"/><path d="M2752 130H2834M2752 583H2834" stroke="#c7c9d0" stroke-width="3"/><path d="M2778 96H2808M2793 81V111M2778 618H2808" stroke="#555" stroke-width="5"/><path d="M2793 153V265" stroke="#c9cbd1" stroke-width="12"/><path d="M2793 298V561" stroke="#2e87ec" stroke-width="12"/><rect x="2764" y="266" width="57" height="32" fill="#fff" stroke="#333" stroke-width="3"/><path d="M2775 282H2811" stroke="#f5404e" stroke-width="6"/>
      <rect x="22.500" y="28.500" width="2847" height="987" fill="none" stroke="#c8c8c8" stroke-width="3"/>
    </svg>
    <div class="dir">
      <p class="s1">지하철 이용 : 8호선 가락시장역 하차 2번출구 직진 300미터 가락시장 동문</p>
      <p class="s1">3호선 가락시장역 하차 8번출구 맞은편 가락시장 남문</p><p></p>
      <p class="s2">고속도로 이용 : 중부고속도로 : 동서울톨게이트 - 판교방향 - 송파IC - 가락시장 남문</p>
      <p class="s3">경부고속도로 : 서울톨케이트 - 구리방향 - 송파IC - 가락시장 남문</p><p></p>
      <p class="s3">자가용 : 내부순환도로 - 청담대교 - 가락시장 북문</p>
      <p class="s4">강남역 - 삼성역- 가락시장방향 뚝방길 - 가락시장 북문</p><p></p>
      <p>버스이용</p><p></p>
      <p>간선버스 : <i>301,302,303,360,362,363,401,461</i></p>
      <p>지선버스 : <i>5,2412,3217,3219,3413,3415,3416,3418,3420,3421,3423,4213,4312</i></p>
      <p>광역버스 : <i>9403</i></p>
    </div>
  </div>
  <footer>
    <div class="logo"><svg width="18" height="22"><use href="#nh"/></svg><b>농협</b></div>
    <nav><a>이용약관</a><i></i><a>개인정보보호정책</a><i></i><a>이메일무단수집거부</a></nav>
    <span class="copy">Copyright (C) 2016 by Nonghyup. All Rights Reserved.</span><span class="tel">전화 : 02-2080-8065</span>
    <div class="family"><span>패밀리 사이트</span><svg width="14" height="8" viewBox="0 0 14 8"><path d="M1 1L7 7L13 1" fill="none" stroke="#fff" stroke-width="1.200"/></svg></div>
  </footer>
  <a class="totop"><svg width="16" height="19"><use href="#nh"/></svg><span><small>▲</small> 맨위로</span></a>
</main>
<div class="scroll"><svg width="9" height="6"><path d="M4.500 0L9 5H0Z" fill="#505050"/></svg><div class="thumb"></div><svg width="9" height="6"><path d="M0 0H9L4.500 5Z" fill="#505050"/></svg></div>
</div>

<div class="taskbar">
  <svg class="start" viewBox="0 0 38 38"><circle cx="19" cy="19" r="18" fill="url(#orb)" stroke="#6d8da3"/><path d="M4 14A16 14 0 0 1 34 14Q19 20 4 14Z" fill="#fff" opacity=".3"/><path d="M11 12Q15 9 19 12L17.500 18.500Q14 16 9.500 18.500Z" fill="#f2642d"/><path d="M20 12.500Q24 15 28.500 12L27 18.500Q23 21 18.700 18.800Z" fill="#8cc63f"/><path d="M9 20Q13 17.500 17.200 20L15.500 26.500Q12 24 7.500 26.500Z" fill="#3fa9f5"/><path d="M18.300 20.300Q22 22.500 26.700 20L25 26.500Q21 29 16.700 26.800Z" fill="#fbd23c"/></svg>
  <div class="task"><svg viewBox="0 0 32 32"><path d="M28 18H11.500A5.600 5.600 0 0 0 21.800 21H27.500A12 12 0 1 1 28 18ZM11.600 13.500H21.800A5.200 5.200 0 0 0 11.600 13.500Z" fill="#42bdf5" stroke="#b8ecff" stroke-width=".8"/><path d="M27.500 8.500C29.500 3 26 1.500 20 4.500C12 8.500 5 17 3.500 23.500C2.500 29 6 30 11 27" fill="none" stroke="#f9c71c" stroke-width="2.600"/></svg></div>
  <div class="task on"><svg viewBox="0 0 32 32"><path d="M2 4H13L15 7H30V28H2Z" fill="#f4db86" stroke="#caa94d"/><path d="M5 3H11V5H5Z" fill="#38a853"/><path d="M12 6H20V9H12Z" fill="#fff"/><path d="M20 8H28V10H20Z" fill="#55a7e0"/><path d="M2 10H30V27H2Z" fill="#f9e8a5"/><path d="M6 30V20Q6 17 9 17H23Q26 17 26 20V30H20V23H12V30Z" fill="#8ec9e6" stroke="#4d9ccb"/></svg></div>
  <div class="task"><svg viewBox="0 0 32 32"><path d="M6 5H27L29 8V28L9 29L6 27Z" fill="#7fb6dc" stroke="#c6e4f7"/><rect x="4" y="6" width="20" height="21" fill="#5e9ccc" stroke="#c6e4f7"/><circle cx="14" cy="16.500" r="8.500" fill="#f58220"/><path d="M11.500 11.500L19 16.500L11.500 21.500Z" fill="#fff"/></svg></div>
  <div class="task on act"><svg><use href="#chrome"/></svg></div>
  <div class="task"><svg viewBox="0 0 32 32"><circle cx="16" cy="14.500" r="13.500" fill="#7cb342"/><circle cx="16" cy="12" r="4" fill="none" stroke="#455a64" stroke-width="3"/><path d="M16 5V9M14 15L6 30M18 15L26 30M9 23Q16 27 23 23" fill="none" stroke="#e8eef0" stroke-width="2.600"/></svg></div>
  <div class="task"><svg viewBox="0 0 32 32"><circle cx="16" cy="16" r="15" fill="url(#purple)"/><path d="M2 13H30M2 17H30M3 21H29" stroke="#e9ddf5" stroke-width="1.500"/></svg></div>
  <div class="task"><svg viewBox="0 0 32 32"><path d="M15 1.500A15 15 0 0 0 15 30.500A19 19 0 0 1 15 1.500Z" fill="#f7941e" stroke="#f7941e" stroke-width="1.500"/><circle cx="18" cy="16" r="13.500" fill="#2c2255"/><path d="M5 12.500H31M4.500 16H32M5 19.500H31" stroke="#fff" stroke-width="2"/></svg></div>
  <div class="task"><svg viewBox="0 0 32 32"><g stroke="#222"><path d="M16 1H28V13H16ZM5 15H17V27H5Z" fill="#d0d0d0"/><path d="M18 13H30L28 17H16ZM3 28H17V31H3Z" fill="#d0d0d0"/><path d="M18 3H26V11H18ZM7 17H15V25H7Z" fill="#00f"/></g><path d="M22 7L12 16H17L10 23L21 14H16Z" fill="#ff0"/></svg></div>
  <div class="task on"><svg viewBox="0 0 32 32"><circle cx="12" cy="20" r="8" fill="none" stroke="#21cc5c" stroke-width="7"/><circle cx="23" cy="5" r="4.500" fill="#21cc5c"/><path d="M22 15L29 17V23Q28 29 22 31Q16 29 15 23V17Z" fill="#ddd"/><path d="M22 17V29Q18 27 17 23H27V18.500L22 17Z" fill="#f4c430"/><path d="M22 17L17 18.500V23H22ZM22 23H27Q26 27 22 29Z" fill="#2a6fd0"/></svg></div>
  <div class="task on"><svg viewBox="0 0 32 32"><rect x="2" y="4" width="28" height="24" fill="#000" stroke="#aab"/><rect x="2" y="4" width="28" height="3" fill="#c7cfd8"/><text x="5" y="15" font-size="8.500" fill="#fff" font-family="Liberation Mono,monospace">C:\_</text></svg></div>
  <div class="task on"><svg viewBox="0 0 32 32"><path d="M1 8L5 3H27L31 8V29H1Z" fill="#f2f2f2"/><rect x="4" y="1" width="24" height="20" rx="2" fill="#484848"/><path d="M3 21H29V25H3Z" fill="#333"/><text x="16" y="17" text-anchor="middle" font-size="16" font-weight="700" fill="#f9943b" font-family="Inter,sans-serif">S</text></svg></div>
  <div class="task on"><svg viewBox="0 0 32 32"><rect x="1" y="1" width="30" height="30" fill="#8d8de6" stroke="#2525a5" stroke-width="2" stroke-dasharray="2 1"/><rect x="4" y="4" width="24" height="24" fill="#c9c9ff"/><path d="M9 7H25V25L23 27H9Z" fill="#7eb0ff" stroke="#111b8c"/><rect x="14" y="10" width="8" height="6" fill="#fff"/><path d="M7 9H11M7 13H11M7 17H11M7 21H11" stroke="#222"/></svg></div>
  <div class="task on talk"><svg viewBox="0 0 32 32"><rect width="32" height="32" fill="#fae100"/><ellipse cx="16" cy="15" rx="13" ry="10" fill="#3b1c1c"/><path d="M9 21L9 28L16 23Z" fill="#3b1c1c"/><text x="16" y="18" text-anchor="middle" font-size="8" font-weight="800" fill="#fae100" font-family="Inter,sans-serif">TALK</text></svg></div><div class="stack"></div><div class="stack"></div>
  <div class="task on first"><svg><use href="#chrome"/></svg></div>
  <div class="task on"><svg viewBox="0 0 32 32"><path d="M2 17Q2 7 14 6T28 12Q28 19 24 24T12 29Q10 26 12 24T6 25T2 17Z" fill="#b9dcef" stroke="#6ba3c7"/><circle cx="7" cy="17" r="2.600" fill="#d94436"/><circle cx="12" cy="11.500" r="2.800" fill="#52b14a"/><circle cx="19" cy="9" r="2.800" fill="#f0b52c"/><circle cx="15" cy="19" r="2" fill="#223"/><path d="M17 31L24 8" stroke="#d78332" stroke-width="3"/><path d="M23 9L24 3L31 1L27 10Z" fill="#c98f55"/></svg></div>
  <div class="tray">
    <svg width="16" height="18" viewBox="0 0 16 18"><circle cx="7" cy="7.500" r="6.500" fill="#6fa8c8"/><path d="M3 3Q8 0 10 5T5 12Q1 8 3 3Z" fill="#5faa48"/><path d="M6 13L13 6L15 9L8 16Z" fill="#e8e2d2"/><path d="M13 6L16 3V8Z" fill="#d8862c"/></svg>
    <b class="ime">A</b><b class="ime han">漢</b><b class="help">?</b>
    <svg width="12" height="22" viewBox="0 0 12 22"><path d="M4.500 2.500H10.500V6.500H4.500ZM1.500 4.500H7.500V8.500H1.500Z" fill="#111" stroke="#fff"/><path d="M2 15H9L5.500 18Z" fill="#fff"/></svg>
    <svg class="up" width="8" height="6"><path d="M4 0L8 5H0Z" fill="#fff"/></svg>
    <svg class="net" width="16" height="16" viewBox="0 0 16 16"><path d="M6.500 4.500H14.500V11.500H6.500ZM8 14.500H13M10.500 12V14M1.500 1V4M4.500 1V4M1 4H5.500V7H1ZM3.200 7V14.500H8" fill="none" stroke="#fff" stroke-width="1.300"/></svg>
    <svg class="vol" width="13" height="14" viewBox="0 0 13 14"><path d="M0 4.500H3L7 1V13L3 9.500H0Z" fill="#fff"/><path d="M9.500 4Q11.500 7 9.500 10" fill="none" stroke="#fff" stroke-width="1.300"/></svg>
  </div>
  <div class="clock"><span>오후 12:48</span><span>2016-10-25</span></div>
  <div class="desk"></div>
</div>
</body>
</html>
```
FILE: styles.css
```css
* { box-sizing: border-box; margin: 0; padding: 0; }
body {
  width: 1920px; height: 1080px; overflow: hidden; display: flex; flex-direction: column;
  font-family: "Noto Sans CJK KR", "Noto Sans", sans-serif; background: #fff;
}
svg { display: block; flex: none; }
.defs { position: absolute; }
i { font-style: normal; }

/* browser chrome */
.tabstrip {
  height: 29px; display: flex; align-items: flex-start; padding-left: 5px; border-bottom: 1px solid #8f99a8;
  background:
    linear-gradient(180deg, transparent 25%, rgba(150,190,235,.75)) 1735px 0 / 185px 28px no-repeat,
    linear-gradient(90deg, #b3c6d3 0, #8aa3b6 100px, #5a7fa3 200px, #33506f 400px, #101823 470px, #101823 1360px, #3d5f86 1540px, #131d2a 1700px, #15202e 1920px);
}
.tabs { display: flex; }
.tab { width: 204px; height: 28px; margin-right: -13px; display: grid; }
.tab > * { grid-area: 1 / 1; }
.tab.active { z-index: 5; height: 29px; }
.shape { width: 204px; height: 100%; fill: url(#tabfill); stroke: #8a9099; stroke-width: 1; }
.lite .shape { fill: url(#tabfill2); }
.active .shape { fill: #f2f2f2; stroke: none; }
.in { display: flex; align-items: center; padding: 2px 0 0 17px; }
.fav { width: 16px; height: 16px; margin-right: 6px; }
.t {
  width: 133px; overflow: hidden; white-space: nowrap; color: #222; letter-spacing: -.12px;
  font: 12px/18px "Noto Sans", "Noto Sans CJK KR", sans-serif;
  -webkit-mask-image: linear-gradient(90deg, #000 108px, transparent 131px);
  mask-image: linear-gradient(90deg, #000 108px, transparent 131px);
}
.ko { letter-spacing: .72px; }
.full { -webkit-mask-image: none; mask-image: none; }
.x { width: 10px; height: 10px; margin-left: 5px; }
.newtab { width: 36px; height: 17px; margin: 7px 0 0 11px; }
.winbtns { margin-left: auto; margin-right: 3px; display: flex; }
.wb { height: 18px; border: 1px solid #0c1118; border-top: 0; background: linear-gradient(#8b95a1, #4a5564 50%, #2a3442 51%, #6c7c90); box-shadow: inset 0 0 0 1px rgba(255,255,255,.45); }
.wb svg { width: 100%; height: 100%; }
.user { width: 24px; margin-right: 5px; border-radius: 0 0 5px 5px; }
.min { width: 27px; border-radius: 0 0 0 5px; }
.res { width: 27px; }
.close { width: 48px; border-radius: 0 0 5px 0; background: linear-gradient(#e3a596, #c9523c 48%, #a82411 50%, #d9603f); }
.toolbar { height: 37px; background: #f2f2f2; border-bottom: 1px solid #b2b2b2; display: flex; align-items: center; }
.nav { margin-right: 6px; }
.url { width: 1759px; height: 29px; border: 1px solid #a6a6a6; border-radius: 3px; background: #fff; display: flex; align-items: center; padding: 0 6px; margin-right: 11px; }
.addr { flex: 1; font: 14px/20px "Noto Sans", sans-serif; color: #000; margin-left: 6px; letter-spacing: -.33px; }
.addr i { color: #808080; }
.toolbar > svg:last-child { margin-left: 21px; }

/* page */
.viewport { height: 974px; display: flex; }
.page { width: 1903px; overflow: hidden; position: relative; }
.col { width: 950px; height: 903px; margin-left: 587px; }
.sched { list-style: none; height: 185px; padding: 0 20px; border-bottom: 1px solid #ccc; font-size: 14px; font-weight: 300; color: #222; overflow: hidden; }
.sched li { height: 42px; line-height: 42px; letter-spacing: .35px; word-spacing: 1.5px; }
.sched li:first-child { margin-top: -27px; line-height: 43px; }
h2 { height: 53px; margin-bottom: 20px; border-bottom: 2px solid #808080; display: flex; align-items: center; padding-top: 16px; font-weight: 300; font-size: 19px; letter-spacing: -.4px; color: #2d2d35; }
h2::before { content: ""; width: 6px; height: 5px; background: #777; margin: 2px 9px 0 0; }
.dir { height: 295px; border-bottom: 1px solid #ccc; font-size: 14px; font-weight: 300; color: #000; }
.dir p { height: 21px; line-height: 19px; white-space: nowrap; letter-spacing: .3px; }
.dir i { letter-spacing: .7px; }
.dir .s1 { letter-spacing: .37px; }
.dir .s2 { letter-spacing: .43px; }
.dir .s3 { letter-spacing: .47px; }
.dir .s4 { letter-spacing: .55px; }
footer { height: 71px; background: #f7f7f7; border-top: 1px solid #dcdcdc; padding-left: 402px; display: flex; align-items: center; font-size: 12px; color: #333; }
.logo { width: 145px; display: flex; align-items: center; gap: 7px; color: #a9a9a9; font-size: 21px; line-height: 24px; letter-spacing: 6px; margin-top: -2px; }
.logo b { font-weight: 700; }
nav { display: flex; width: 325px; align-items: center; letter-spacing: .25px; white-space: nowrap; margin-top: 2px; font-weight: 300; }
nav i { width: 1px; height: 11px; background: #999; margin: -2px 14px 0; }
.copy { width: 301px; white-space: nowrap; font-weight: 300; letter-spacing: .03px; margin-top: 2px; }
.tel { width: 138px; white-space: nowrap; font-weight: 300; letter-spacing: .15px; margin-top: 2px; }
.family { width: 210px; height: 28px; border: 1px solid #231815; background: #918e8f; color: #fff; display: flex; align-items: center; justify-content: space-between; padding: 0 12px 2px 9px; letter-spacing: .3px; }
.totop { position: absolute; left: 1562px; top: 808px; width: 67px; height: 70px; border-radius: 9px; background: #004ea8; color: #fff; display: flex; flex-direction: column; align-items: center; padding-top: 14px; font-size: 13px; font-weight: 500; line-height: 22px; white-space: nowrap; letter-spacing: -.6px; }
.totop svg { color: #fc0; }
.totop small { font-size: 8px; vertical-align: 1px; }
.scroll { width: 17px; background: #f1f1f1; display: flex; flex-direction: column; align-items: center; padding: 7px 0 6px; }
.thumb { width: 14px; height: 280px; margin: 552px 0 auto; background: #c1c1c1; }

/* map labels */
.map { display: block; }
.lb { font-size: 35px; font-weight: 500; text-anchor: middle; fill: #444; stroke: #fff; stroke-width: 7px; stroke-linejoin: round; paint-order: stroke; letter-spacing: -.3px; }
.lb .ic { font: 700 23px Inter, sans-serif; fill: #333; stroke: none; }
.lb .dim { fill: #888; font-size: 31px; }
.lb .br { fill: #94545c; font-size: 33px; }
.lb .dist { fill: #6e8790; letter-spacing: 8px; }
.lb .hw { font-size: 29px; fill: #7a4a12; stroke: none; letter-spacing: 3px; }
.lb .bd { font-size: 32px; fill: #fff2b0; stroke: #e3a000; stroke-width: 6px; }
.lb .l3 { font-size: 33px; fill: #fff; stroke: #f08048; stroke-width: 6px; }
.lb .l8 { font-size: 28px; fill: #fff; stroke: #dd4f86; stroke-width: 6px; }
.lb .wt { font-size: 33px; fill: #355b86; stroke: none; }
.naver { font: 900 31px Inter, sans-serif; fill: #1ec800; stroke: #1ec800; stroke-width: 1.5px; }
.corp { font: 30px "Liberation Sans", sans-serif; fill: #444; stroke: #fff; stroke-width: 4px; paint-order: stroke; }
.scale { font: 700 27px "Liberation Sans", sans-serif; text-anchor: middle; stroke: #fff; stroke-width: 4px; paint-order: stroke; }
.info { font-size: 37px; fill: #111; }
.info .b { font-size: 42px; font-weight: 700; }
.ctl { font-size: 39px; text-anchor: middle; }

/* taskbar */
.taskbar { height: 40px; background: linear-gradient(#6e7b88 0, #6e7b88 1px, #26323e 2px, #0c121b 4px, #070b12); display: flex; align-items: center; }
.start { width: 38px; height: 38px; margin: 1px 14px 0 8px; }
.task { width: 58px; height: 38px; margin-right: 4px; display: flex; align-items: center; justify-content: center; flex: none; margin-top: 1px; }
.task svg { width: 32px; height: 32px; }
.on { border: 1px solid #868b90; border-radius: 3px; background: linear-gradient(155deg, #a4a6a8 0, #4b4f53 38%, #23282d 60%, #2c3136); }
.act { background: linear-gradient(155deg, #ddd 0, #b5b7b9 40%, #8c8f92 60%, #a3a5a7); border-color: #ccc; }
.talk { width: 51px; margin-right: 0; }
.stack { width: 3px; height: 38px; border: 1px solid #70757a; border-left: 0; background: #15191e; margin-top: 1px; }
.first { margin-left: 5px; }
.tray { display: flex; align-items: center; margin-left: auto; width: 185px; }
.ime { width: 18px; height: 24px; margin-left: 3px; background: #32363b; border: 1px solid #555; color: #fff; font: 700 21px/22px "Liberation Sans", sans-serif; text-align: center; }
.ime.han { margin-left: 1px; width: 20px; font: 500 18px/20px "Noto Sans CJK KR", sans-serif; }
.help { width: 15px; height: 15px; margin: -4px 7px 0 5px; border-radius: 50%; background: #1a2fc0; border: 1px solid #cfd6ff; color: #fff; font: 700 11px/13px "Liberation Sans", sans-serif; text-align: center; }
.up { margin: 3px 0 0 8px; }
.net { margin: 3px 0 0 13px; }
.vol { margin: 2px 0 0 10px; }
.clock { width: 68px; margin-right: 13px; margin-top: 2px; display: flex; flex-direction: column; align-items: center; color: #fff; font: 13px/17px "Noto Sans", "Noto Sans CJK KR", sans-serif; white-space: nowrap; letter-spacing: -.25px; }
.desk { width: 13px; height: 38px; border: 1px solid #55606b; background: linear-gradient(160deg, #59616a, #12161c 60%); }
```
